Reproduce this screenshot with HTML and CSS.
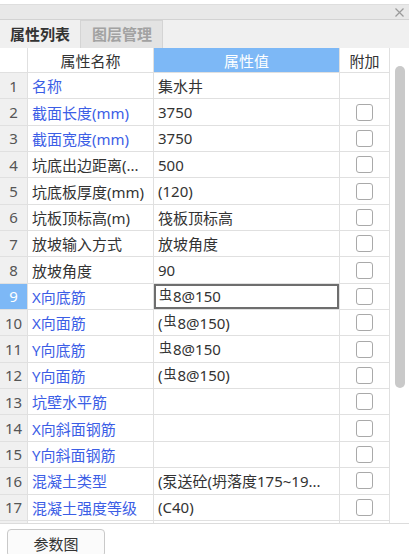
FILE: index.html
```html
<!DOCTYPE html>
<html lang="zh">
<head>
<meta charset="utf-8">
<link rel="stylesheet" href="styles.css">
</head>
<body>
<div class="titlebar">
  <svg class="close" width="9" height="9" viewBox="0 0 9 9"><path d="M0.5 0.5L8.5 8.5M8.5 0.5L0.5 8.5" stroke="#9a9a9a" stroke-width="1.2"/></svg>
</div>
<div class="tabs">
  <div class="tab active">属性列表</div>
  <div class="tab">图层管理</div>
</div>
<div class="panel">
  <div class="grid">
    <div class="c num head"></div>
    <div class="c head">属性名称</div>
    <div class="c head val">属性值</div>
    <div class="c head">附加</div>

    <div class="c num">1</div><div class="c name blue">名称</div><div class="c v">集水井</div><div class="c ck"></div>
    <div class="c num">2</div><div class="c name blue">截面长度(mm)</div><div class="c v">3750</div><div class="c ck"><span class="box"></span></div>
    <div class="c num">3</div><div class="c name blue">截面宽度(mm)</div><div class="c v">3750</div><div class="c ck"><span class="box"></span></div>
    <div class="c num">4</div><div class="c name">坑底出边距离(...</div><div class="c v">500</div><div class="c ck"><span class="box"></span></div>
    <div class="c num">5</div><div class="c name">坑底板厚度(mm)</div><div class="c v">(120)</div><div class="c ck"><span class="box"></span></div>
    <div class="c num">6</div><div class="c name">坑板顶标高(m)</div><div class="c v">筏板顶标高</div><div class="c ck"><span class="box"></span></div>
    <div class="c num">7</div><div class="c name">放坡输入方式</div><div class="c v">放坡角度</div><div class="c ck"><span class="box"></span></div>
    <div class="c num">8</div><div class="c name">放坡角度</div><div class="c v">90</div><div class="c ck"><span class="box"></span></div>
    <div class="c num sel">9</div><div class="c name blue">X向底筋</div><div class="c v focus"><span class="rb">虫</span>8@150</div><div class="c ck"><span class="box"></span></div>
    <div class="c num">10</div><div class="c name blue">X向面筋</div><div class="c v">(<span class="rb">虫</span>8@150)</div><div class="c ck"><span class="box"></span></div>
    <div class="c num">11</div><div class="c name blue">Y向底筋</div><div class="c v"><span class="rb">虫</span>8@150</div><div class="c ck"><span class="box"></span></div>
    <div class="c num">12</div><div class="c name blue">Y向面筋</div><div class="c v">(<span class="rb">虫</span>8@150)</div><div class="c ck"><span class="box"></span></div>
    <div class="c num">13</div><div class="c name blue">坑壁水平筋</div><div class="c v"></div><div class="c ck"><span class="box"></span></div>
    <div class="c num">14</div><div class="c name blue">X向斜面钢筋</div><div class="c v"></div><div class="c ck"><span class="box"></span></div>
    <div class="c num">15</div><div class="c name blue">Y向斜面钢筋</div><div class="c v"></div><div class="c ck"><span class="box"></span></div>
    <div class="c num">16</div><div class="c name blue">混凝土类型</div><div class="c v">(泵送砼(坍落度175~19...</div><div class="c ck"><span class="box"></span></div>
    <div class="c num">17</div><div class="c name blue">混凝土强度等级</div><div class="c v">(C40)</div><div class="c ck"><span class="box"></span></div>
    <div class="c num">18</div><div class="c name"></div><div class="c v"></div><div class="c ck"></div>
  </div>
  <div class="scroll"><div class="thumb"></div></div>
</div>
<div class="footer">
  <button class="btn">参数图</button>
</div>
</body>
</html>
```

FILE: styles.css
```css
* { box-sizing: border-box; }
html, body { margin: 0; padding: 0; background: #fff; }
body {
  width: 409px;
  height: 554px;
  overflow: hidden;
  padding-top: 4px;
  font-family: "Noto Sans", "Noto Sans CJK SC", sans-serif;
  font-size: 15px;
  color: #333;
}
.titlebar {
  height: 16px;
  background: #e8e8e8;
  border-top: 1px solid #dedede;
  border-bottom: 1px solid #d2d2d2;
  display: flex;
  justify-content: flex-end;
  align-items: center;
  padding-right: 5px;
}
.close { display: block; }
.tabs {
  height: 28px;
  background: #f0f0f0;
  display: flex;
}
.tab {
  display: flex;
  align-items: center;
  padding: 0 10px 0 11px;
  font-weight: bold;
  color: #a2a2a2;
  background: #e3e3e3;
  border: 1px solid #d4d4d4;
  border-bottom: none;
  line-height: 1;
}
.tab.active {
  color: #333;
  background: #f0f0f0;
  border: none;
  padding: 0 10px;
  width: 80px;
}
.panel {
  display: flex;
  border-bottom: 1px solid #dcdcdc;
  height: 476px;
}
.grid {
  width: 390px;
  height: 475px;
  overflow: hidden;
  display: grid;
  grid-template-columns: 28px 126px 186px 50px;
  grid-template-rows: 25px;
  grid-auto-rows: 26.35px;
}
.c {
  border-right: 1px solid #e0e0e0;
  border-bottom: 1px solid #e0e0e0;
  display: flex;
  align-items: center;
  white-space: nowrap;
  overflow: hidden;
  padding-left: 4px;
}
.head {
  justify-content: center;
  padding-left: 0;
  background: #fff;
  color: #333;
}
.head.val {
  background: #7db8f6;
  color: #fff;
}
.num {
  background: #f0f0f0;
  justify-content: center;
  padding-left: 0;
  color: #555;
}
.num.head { background: #fff; }
.num.sel {
  background: #7db8f6;
  color: #fff;
}
.blue { color: #3c5ee6; }
.v { color: #333; }
.focus {
  box-shadow: inset 0 0 0 2px #6e6e6e;
}
.rb {
  font-size: 13px;
  position: relative;
  top: -3px;
  margin: 0 1px 0 1px;
  font-family: "Noto Sans CJK SC", sans-serif;
}
.ck {
  justify-content: center;
  padding-left: 0;
}
.box {
  width: 17px;
  height: 17px;
  border: 1.5px solid #a9a9a9;
  border-radius: 3px;
  background: #fff;
}
.scroll {
  flex: 1;
  padding-top: 18px;
  display: flex;
  justify-content: center;
}
.thumb {
  width: 10px;
  height: 322px;
  background: #c9c9c9;
  border-radius: 5px;
}
.footer {
  padding: 5px 0 0 7px;
}
.btn {
  width: 98px;
  height: 28px;
  background: #fbfbfb;
  border: 1px solid #c9c9c9;
  border-radius: 4px;
  font-family: "Noto Sans CJK SC", sans-serif;
  font-size: 15px;
  line-height: 1;
  color: #333;
  padding: 0;
}
```
